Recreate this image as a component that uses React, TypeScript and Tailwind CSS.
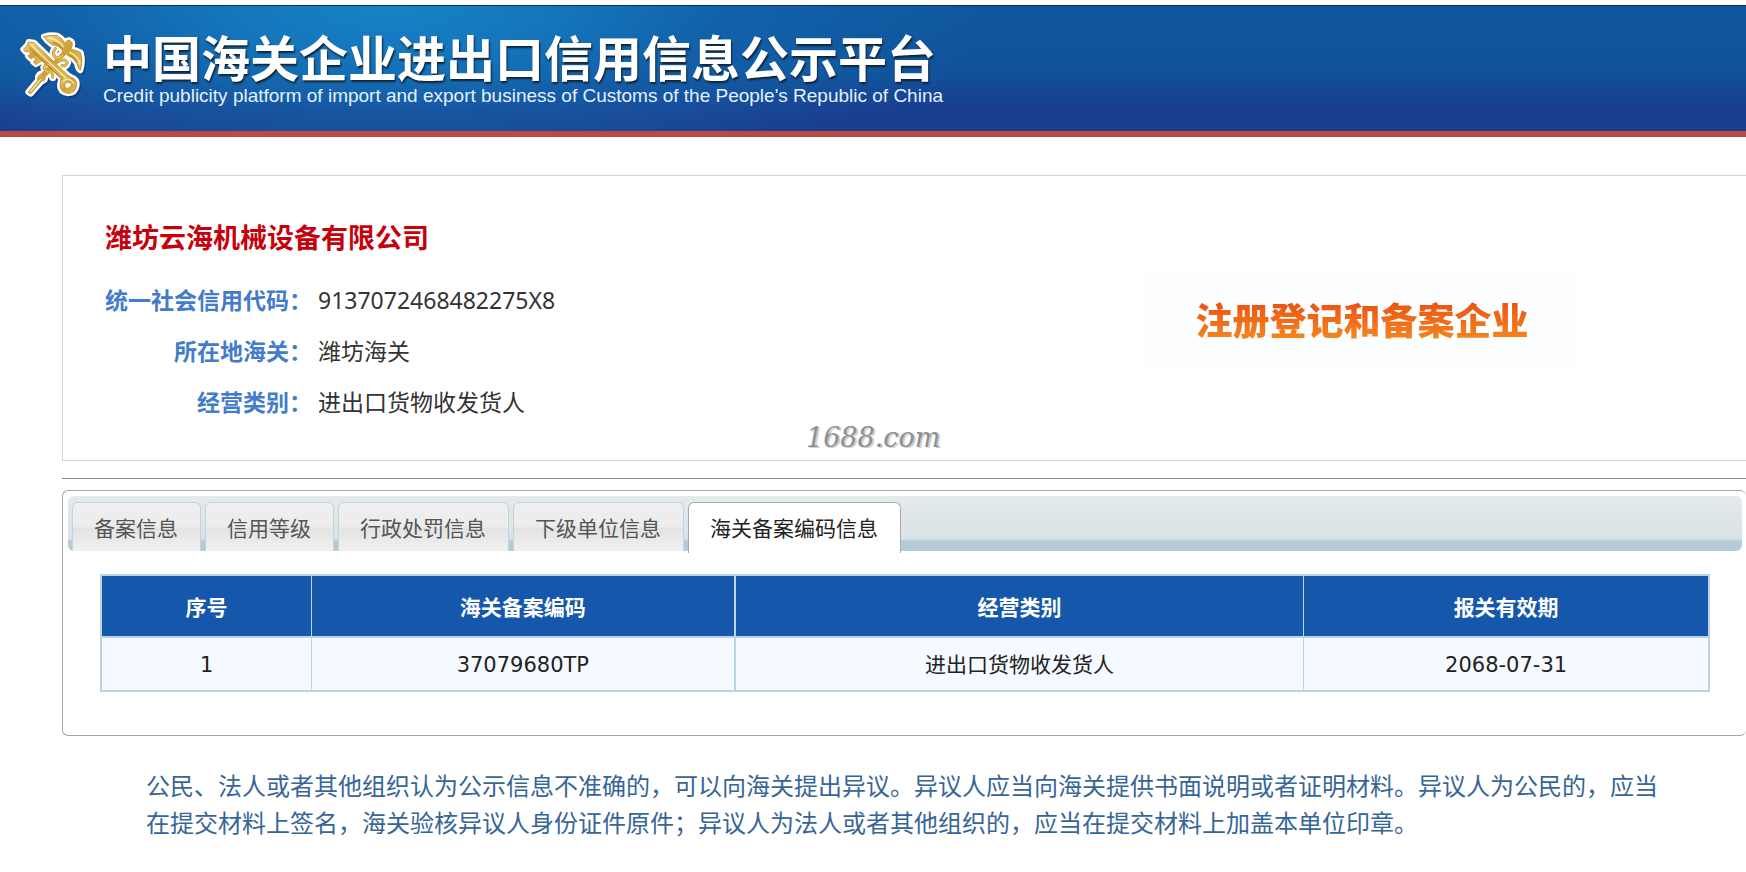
import { useState } from "react";

const details = [
  { label: "统一社会信用代码：", value: "9137072468482275X8" },
  { label: "所在地海关：", value: "潍坊海关" },
  { label: "经营类别：", value: "进出口货物收发货人" },
];

const tabs = [
  "备案信息",
  "信用等级",
  "行政处罚信息",
  "下级单位信息",
  "海关备案编码信息",
];

function CustomsEmblem() {
  return (
    <svg viewBox="0 0 222 222" className="h-[74px] w-[74px] shrink-0" aria-hidden="true">
      <defs>
        <linearGradient id="gold" x1="0" y1="0" x2="1" y2="1">
          <stop offset="0" stopColor="#f0d684" />
          <stop offset="0.5" stopColor="#d0a038" />
          <stop offset="1" stopColor="#e6c35a" />
        </linearGradient>
        <g id="emblem" strokeLinecap="round" strokeLinejoin="round">
          {/* caduceus staff */}
          <path d="M37 192 L72 150 L80 156 L44 197 Z" />
          <path d="M66 146 Q70 136 80 138 Q92 144 86 156 Q76 164 66 156 Z" />
          <path d="M78 136 L146 66 L154 73 L90 144 Z" />
          {/* wings and head */}
          <path d="M84 26 Q104 20 124 23 Q140 32 148 48 Q150 36 160 37 Q172 42 168 54 Q166 60 164 64 Q180 66 194 74 Q202 100 193 127 Q186 124 183 106 Q174 90 152 80 Q138 76 138 64 Q126 52 108 50 Q94 42 84 26 Z" />
          {/* key shaft and teeth */}
          <path d="M38 42 L54 44 L160 146 L146 160 L34 58 Z" />
          <path d="M36 50 L22 64 L29 72 L38 70 L44 77 L36 84 L44 92 L53 88 L60 94 L52 102 L60 109 L80 96 Z" />
          {/* key bow */}
          <path
            d="M136 152 Q150 138 166 148 Q184 154 182 172 Q178 196 156 196 Q132 192 132 172 Z M152 162 Q142 170 148 180 Q158 184 166 174 Q168 162 160 164 Z"
            fillRule="evenodd"
          />
        </g>
        <path
          id="snakes"
          d="M118 62 Q106 76 118 88 Q132 92 140 82 M130 100 Q146 90 154 104 Q150 118 138 112 M104 112 Q90 104 84 118 Q88 134 104 132 Q112 136 110 148"
          fill="none"
          strokeLinecap="round"
        />
      </defs>
      <g opacity="0.45" transform="translate(6 7)">
        <use href="#emblem" fill="#06265c" stroke="#06265c" strokeWidth="14" />
      </g>
      <use href="#emblem" fill="#fff" stroke="#fff" strokeWidth="18" />
      <use href="#snakes" stroke="#fff" strokeWidth="22" />
      <use href="#snakes" stroke="#c99a30" strokeWidth="9" />
      <use href="#emblem" fill="url(#gold)" stroke="#c39633" strokeWidth="3" />
      <use href="#snakes" stroke="#e7c767" strokeWidth="4" />
      <path
        d="M44 50 L150 150 M96 30 Q124 32 142 56 M162 74 Q186 82 192 108 M140 160 Q160 146 174 166 M44 190 L74 154"
        fill="none"
        stroke="#faebb0"
        strokeWidth="4"
        strokeLinecap="round"
      />
      <path
        d="M40 60 L140 156 M110 44 Q128 46 140 62 M160 80 Q176 88 184 104"
        fill="none"
        stroke="#a97a20"
        strokeWidth="3"
        strokeLinecap="round"
      />
    </svg>
  );
}

function Header() {
  return (
    <header className="mt-[5px] flex h-[132px] items-start border-t border-b-[6px] border-t-[#0c2d63] border-b-[#b94a48] bg-[radial-gradient(ellipse_600px_190px_at_390px_0px,#1682c6_0%,#1577bd_25%,rgba(20,110,180,0.5)_55%,rgba(20,90,160,0)_100%),linear-gradient(to_bottom,#0f579f_0%,#10529b_52%,#1a3e90_82%,#1b3b8b_100%)] pt-[22px] pl-4">
      <CustomsEmblem />
      <div className="pt-[2px] pl-[13px] text-white">
        <h1 className="text-[49px] leading-[56px] font-bold [text-shadow:1px_2px_2px_#123]">
          中国海关企业进出口信用信息公示平台
        </h1>
        <p className="font-['Liberation_Sans',sans-serif] text-[19px] leading-[20px] text-[#e3f1ff]">
          Credit publicity platform of import and export business of Customs of the People's Republic of China
        </p>
      </div>
    </header>
  );
}

function CompanyCard() {
  return (
    <section className="relative flex justify-between border border-r-0 border-[#d4d4d4] pt-[42px] pr-[166px] pb-8 pl-[42px]">
      <div>
        <h2 className="text-[27px] leading-[40px] font-bold text-[#c7000b]">
          潍坊云海机械设备有限公司
        </h2>
        <dl className="mt-[17px] grid grid-cols-[auto_1fr] gap-x-[6px] text-[23px] leading-[51px]">
          {details.map(({ label, value }) => (
            <div key={label} className="col-span-2 grid grid-cols-subgrid">
              <dt className="text-right font-bold text-[#437ccb]">{label}</dt>
              <dd className="text-[#333]">{value}</dd>
            </div>
          ))}
        </dl>
      </div>
      <div className="mt-[57px] flex h-[92px] w-[436px] items-center justify-center bg-[#fcfeff]">
        <strong className="bg-linear-to-b from-[#ea4c12] to-[#f58a1f] bg-clip-text text-[37px] leading-[44px] font-black text-transparent">
          注册登记和备案企业
        </strong>
      </div>
      <span className="absolute bottom-[6px] left-[743px] font-['DejaVu_Serif',serif] text-[27px] leading-[32px] text-[#8f8f8f] italic [text-shadow:2px_1px_0_#d0d0d0]">
        1688.com
      </span>
    </section>
  );
}

function RecordPanel() {
  const [active, setActive] = useState(4);

  return (
    <section className="mt-[11px] rounded-md border border-r-0 border-[#a6a6a6] pt-[5px] pr-1 pb-[43px] pl-[5px]">
      <div
        role="tablist"
        className="flex h-[55px] items-start gap-1 rounded-md bg-[linear-gradient(to_bottom,#e4eaec_0%,#d9e2e6_78%,#b3cad9_82%,#b5cbd8_100%)] pt-[6px] pl-1"
      >
        {tabs.map((tab, i) => (
          <button
            key={tab}
            type="button"
            role="tab"
            aria-selected={i === active}
            onClick={() => setActive(i)}
            className={
              i === active
                ? "h-[51px] rounded-t-md border border-b-0 border-[#aaa] bg-white pt-[2px] pr-[22px] pl-[21px] text-[21px] text-[#222]"
                : "h-[49px] rounded-t-md border border-b-0 border-[#c5d3da] bg-[linear-gradient(to_bottom,#efefef_0%,#ececec_50%,#e3e3e3_52%,#f1f1f1_100%)] pt-[3px] pr-[22px] pl-[21px] text-[21px] text-[#555]"
            }
          >
            {tab}
          </button>
        ))}
      </div>
      <div className="pt-[23px] pr-8 pl-8">
        <table className="w-full table-fixed border-collapse border-2 border-[#bcd3e2] text-center text-[21px] text-[#222]">
          <colgroup>
            <col className="w-[13.1%]" />
            <col className="w-[26.3%]" />
            <col className="w-[35.4%]" />
            <col />
          </colgroup>
          <thead>
            <tr className="h-[62px] bg-[#1557ab] text-white">
              <th className="border border-[#bcd3e2] pt-[3px] font-bold">序号</th>
              <th className="border border-r-2 border-[#bcd3e2] pt-[3px] font-bold">海关备案编码</th>
              <th className="border border-[#bcd3e2] pt-[3px] font-bold">经营类别</th>
              <th className="border border-[#bcd3e2] pt-[3px] font-bold">报关有效期</th>
            </tr>
          </thead>
          <tbody className="font-['DejaVu_Sans','Noto_Sans_CJK_SC',sans-serif]">
            <tr className="h-[54px] border-t-2 border-[#bcd3e2] bg-[#f4faff]">
              <td className="border-r border-[#bcd3e2] pt-[3px]">1</td>
              <td className="border-r-2 border-[#bcd3e2] pt-[3px]">37079680TP</td>
              <td className="border-r border-[#bcd3e2] pt-[3px]">进出口货物收发货人</td>
              <td className="pt-[3px]">2068-07-31</td>
            </tr>
          </tbody>
        </table>
      </div>
    </section>
  );
}

export default function App() {
  return (
    <div className="overflow-x-hidden bg-white pb-8 font-['Noto_Sans','Noto_Sans_CJK_SC',sans-serif]">
      <Header />
      <main className="pt-[38px] pl-[62px]">
        <CompanyCard />
        <hr className="mt-[17px] border-[#85859a]" />
        <RecordPanel />
        <p className="mt-[31px] pr-20 pl-[84px] text-2xl leading-[37px] text-[#366596]">
          公民、法人或者其他组织认为公示信息不准确的，可以向海关提出异议。异议人应当向海关提供书面说明或者证明材料。异议人为公民的，应当在提交材料上签名，海关验核异议人身份证件原件；异议人为法人或者其他组织的，应当在提交材料上加盖本单位印章。
        </p>
      </main>
    </div>
  );
}
